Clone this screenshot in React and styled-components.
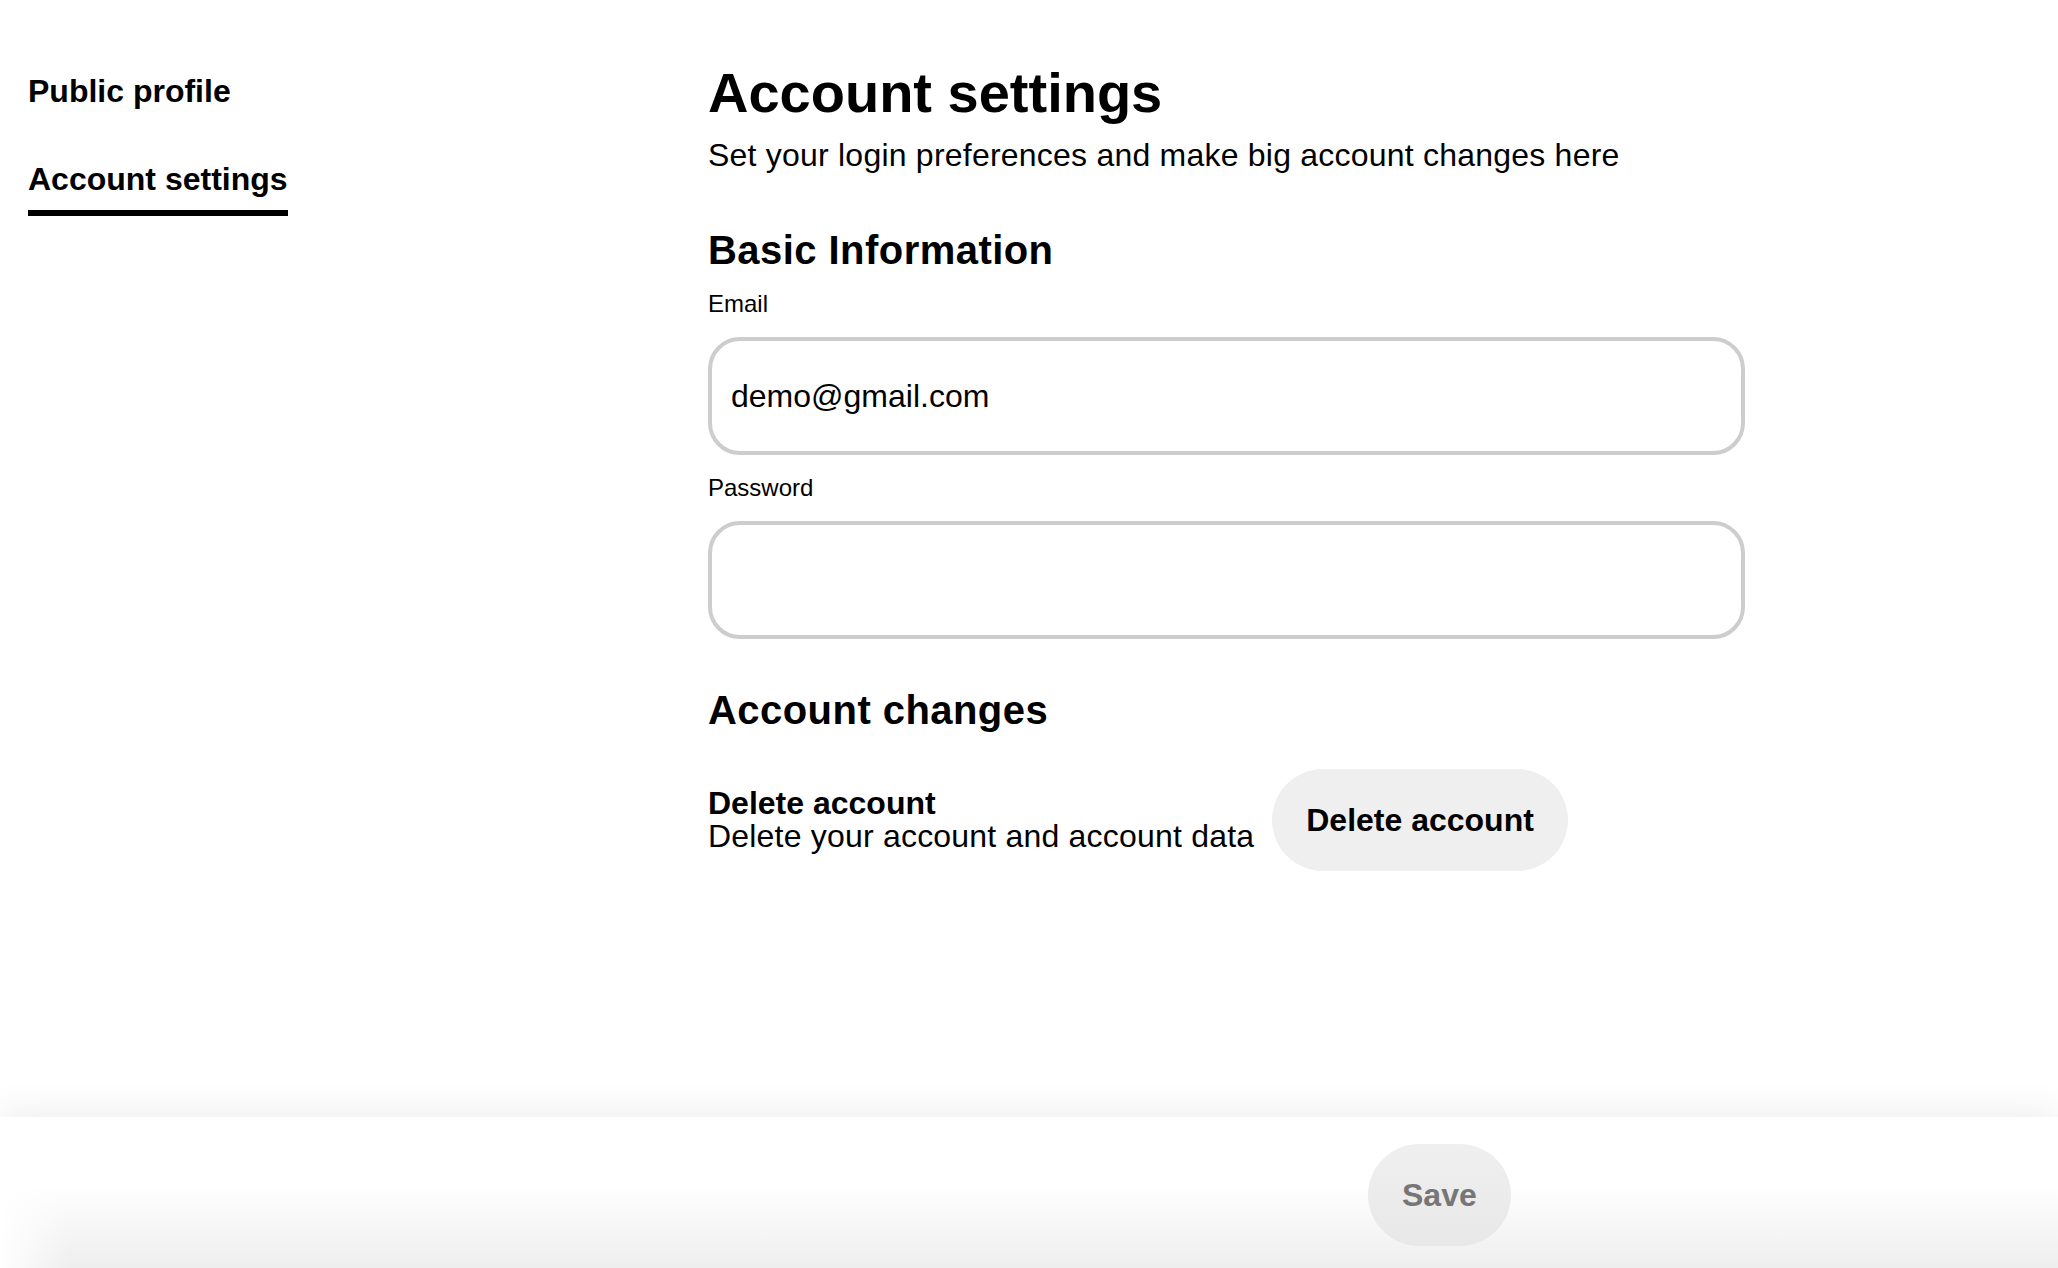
import React, { useState } from "react";
import styled, { createGlobalStyle } from "styled-components";

const GlobalStyle = createGlobalStyle`
  html, body {
    margin: 0;
    padding: 0;
    background: #ffffff;
  }

  body {
    font-family: "Liberation Sans", Arial, Helvetica, sans-serif;
    color: #000000;
  }

  * {
    box-sizing: border-box;
  }
`;

const App = () => {
  const [email, setEmail] = useState("demo@gmail.com");
  const [password, setPassword] = useState("");

  return (
    <Page>
      <GlobalStyle />
      <Content>
        <SideNav>
          <NavItem>Public profile</NavItem>
          <NavItem active>Account settings</NavItem>
        </SideNav>

        <Main>
          <Title>Account settings</Title>
          <Subtitle>
            Set your login preferences and make big account changes here
          </Subtitle>

          <SectionTitle>Basic Information</SectionTitle>
          <Field>
            <Label htmlFor="email">Email</Label>
            <Input
              id="email"
              type="text"
              value={email}
              onChange={(e) => setEmail(e.target.value)}
            />
          </Field>
          <Field>
            <Label htmlFor="password">Password</Label>
            <Input
              id="password"
              type="password"
              value={password}
              onChange={(e) => setPassword(e.target.value)}
            />
          </Field>

          <SectionTitle className="changes">Account changes</SectionTitle>
          <ChangeRow>
            <ChangeText>
              <strong>Delete account</strong>
              <span>Delete your account and account data</span>
            </ChangeText>
            <PillButton type="button">Delete account</PillButton>
          </ChangeRow>
        </Main>
      </Content>

      <Footer>
        <PillButton type="button" muted>
          Save
        </PillButton>
      </Footer>
    </Page>
  );
};

export default App;

const Page = styled.div`
  display: flex;
  flex-direction: column;
  min-height: 100vh;
  overflow: hidden;
`;

const Content = styled.div`
  flex: 1;
  display: grid;
  grid-template-columns: 680px 1037px;
  padding-left: 28px;
`;

const SideNav = styled.nav`
  display: flex;
  flex-direction: column;
  align-items: flex-start;
  gap: 52px;
  padding-top: 73px;
`;

const NavItem = styled.a`
  font-size: 32px;
  line-height: 36px;
  font-weight: 700;
  color: #000000;
  cursor: pointer;
  padding-bottom: ${(p) => (p.active ? "13px" : "0")};
  border-bottom: ${(p) => (p.active ? "6px solid #000000" : "none")};
`;

const Main = styled.main`
  display: flex;
  flex-direction: column;
  padding-top: 61px;

  .changes {
    margin-top: 48px;
  }
`;

const Title = styled.h1`
  margin: 0;
  font-size: 56px;
  line-height: 64px;
  font-weight: 700;
`;

const Subtitle = styled.p`
  margin: 12px 0 0;
  font-size: 32px;
  line-height: 36px;
  letter-spacing: 0.22px;
`;

const SectionTitle = styled.h2`
  margin: 54px 0 0;
  font-size: 40px;
  line-height: 46px;
  font-weight: 700;
  letter-spacing: 0.45px;
`;

const Field = styled.div`
  display: flex;
  flex-direction: column;
  gap: 19px;
  margin-top: 17px;

  & + & {
    margin-top: 19px;
  }
`;

const Label = styled.label`
  font-size: 24px;
  line-height: 28px;
`;

const Input = styled.input`
  width: 100%;
  height: 118px;
  padding: 0 19px;
  border: 4px solid #cdcdcd;
  border-radius: 32px;
  font-family: inherit;
  font-size: 32px;
  color: #000000;
  background: #ffffff;
  outline: none;
`;

const ChangeRow = styled.div`
  display: flex;
  align-items: center;
  gap: 18px;
  margin-top: 36px;
`;

const ChangeText = styled.div`
  display: flex;
  flex-direction: column;
  font-size: 32px;
  line-height: 33px;
  letter-spacing: 0.2px;

  strong {
    font-weight: 700;
    letter-spacing: 0;
  }
`;

const PillButton = styled.button`
  height: 102px;
  padding: 0 34px;
  border: none;
  border-radius: 51px;
  background: ${(p) =>
    p.muted ? "linear-gradient(#efefef, #e8e8e8)" : "#efefef"};
  color: ${(p) => (p.muted ? "#767676" : "#000000")};
  font-family: inherit;
  font-size: 32px;
  font-weight: 700;
  cursor: pointer;
`;

const Footer = styled.footer`
  display: flex;
  align-items: flex-start;
  height: 151px;
  padding: 27px 0 0 1368px;
  background: linear-gradient(to right, #ffffff, rgba(255, 255, 255, 0) 70px),
    linear-gradient(to bottom, #ffffff 45%, #eeeeee 100%);
  box-shadow: 0 -6px 34px rgba(0, 0, 0, 0.07);
  position: relative;
`;
